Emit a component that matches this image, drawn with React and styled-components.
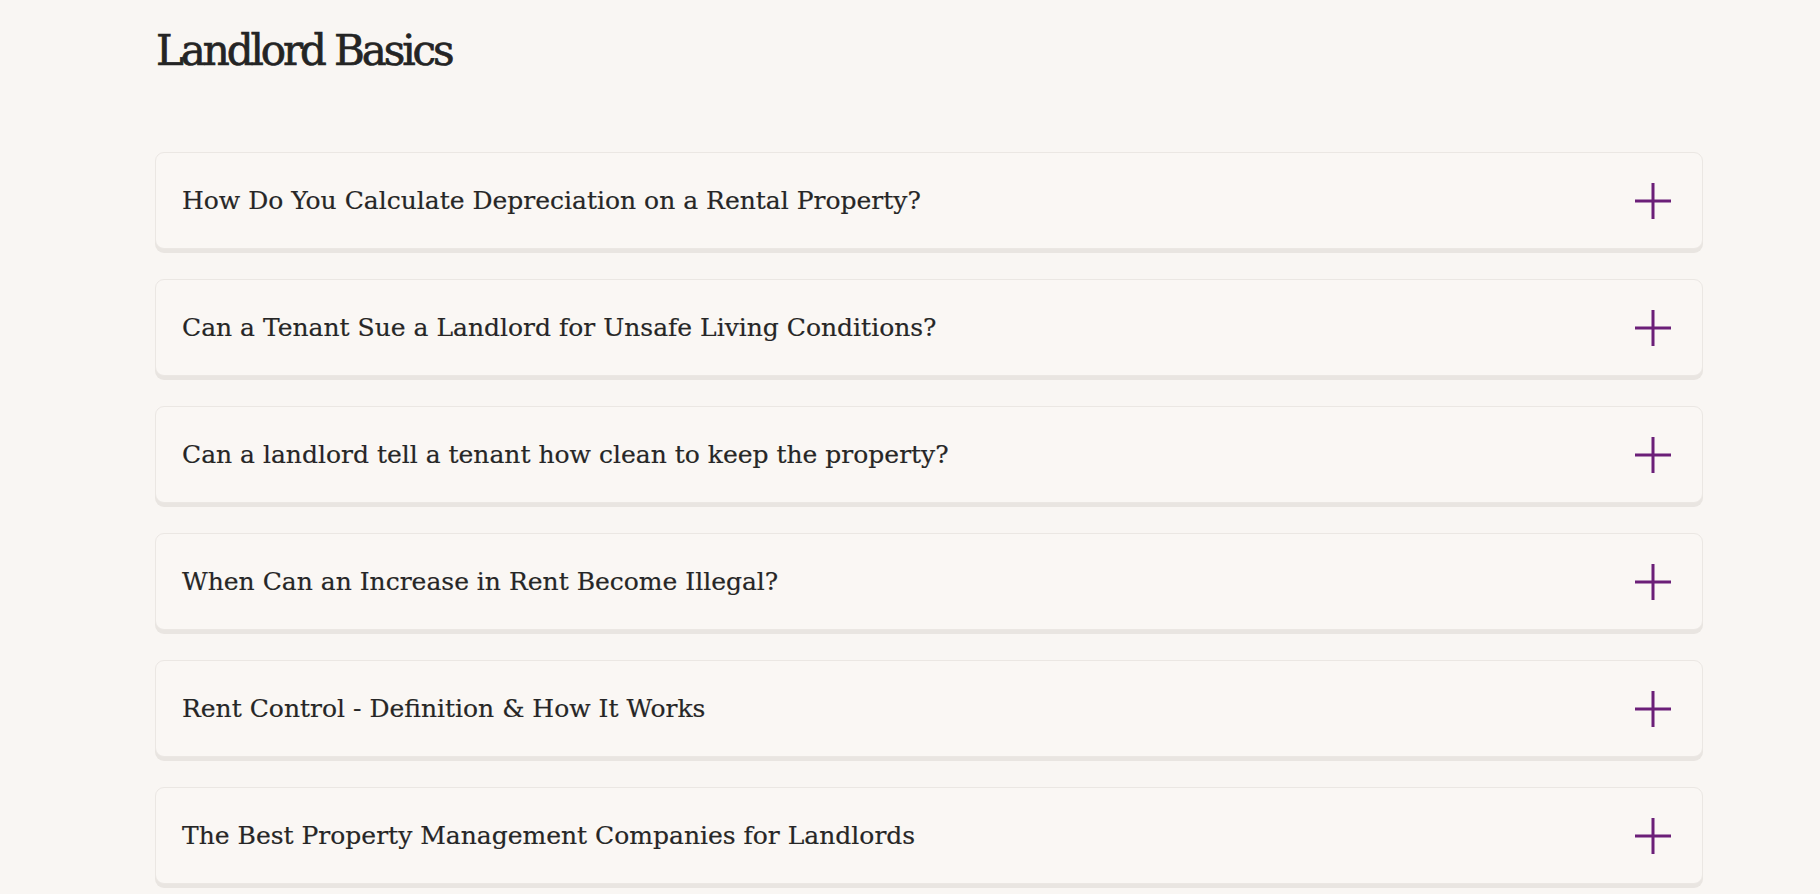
import React from 'react';
import styled, { createGlobalStyle } from 'styled-components';

const GlobalStyle = createGlobalStyle`
  html, body {
    margin: 0;
    padding: 0;
    background: #f9f6f3;
  }
  body {
    font-family: "DejaVu Serif", "Liberation Serif", serif;
    color: #262626;
  }
`;

const Page = styled.main`
  padding: 22px 117px 0 155px;
  min-height: 894px;
  box-sizing: border-box;
`;

const Title = styled.h1`
  margin: 0 0 73px 1px;
  font-size: 42px;
  font-weight: 400;
  letter-spacing: -3.1px;
  line-height: 57px;
  color: #242424;
  -webkit-text-stroke: 0.7px #242424;
`;

const List = styled.div`
  display: flex;
  flex-direction: column;
  gap: 30px;
`;

const Item = styled.div`
  display: flex;
  align-items: center;
  justify-content: space-between;
  height: 97px;
  box-sizing: border-box;
  padding: 0 30px 0 26px;
  background: #faf7f4;
  border: 1px solid #ebe7e3;
  border-radius: 9px;
  box-shadow: 0 4px 0 #e9e5e1;
`;

const Question = styled.span`
  font-size: 25px;
  letter-spacing: 0;
  color: #262626;
  -webkit-text-stroke: 0.2px #262626;
`;

const PlusIcon = () => (
  <svg width="38" height="38" viewBox="0 0 38 38" aria-hidden="true">
    <path d="M19 1v36M1 19h36" stroke="#6b1f78" strokeWidth="3" fill="none" />
  </svg>
);

const questions = [
  'How Do You Calculate Depreciation on a Rental Property?',
  'Can a Tenant Sue a Landlord for Unsafe Living Conditions?',
  'Can a landlord tell a tenant how clean to keep the property?',
  'When Can an Increase in Rent Become Illegal?',
  'Rent Control - Definition & How It Works',
  'The Best Property Management Companies for Landlords',
];

export default function App() {
  return (
    <>
      <GlobalStyle />
      <Page>
        <Title>Landlord Basics</Title>
        <List>
          {questions.map((q) => (
            <Item key={q}>
              <Question>{q}</Question>
              <PlusIcon />
            </Item>
          ))}
        </List>
      </Page>
    </>
  );
}
